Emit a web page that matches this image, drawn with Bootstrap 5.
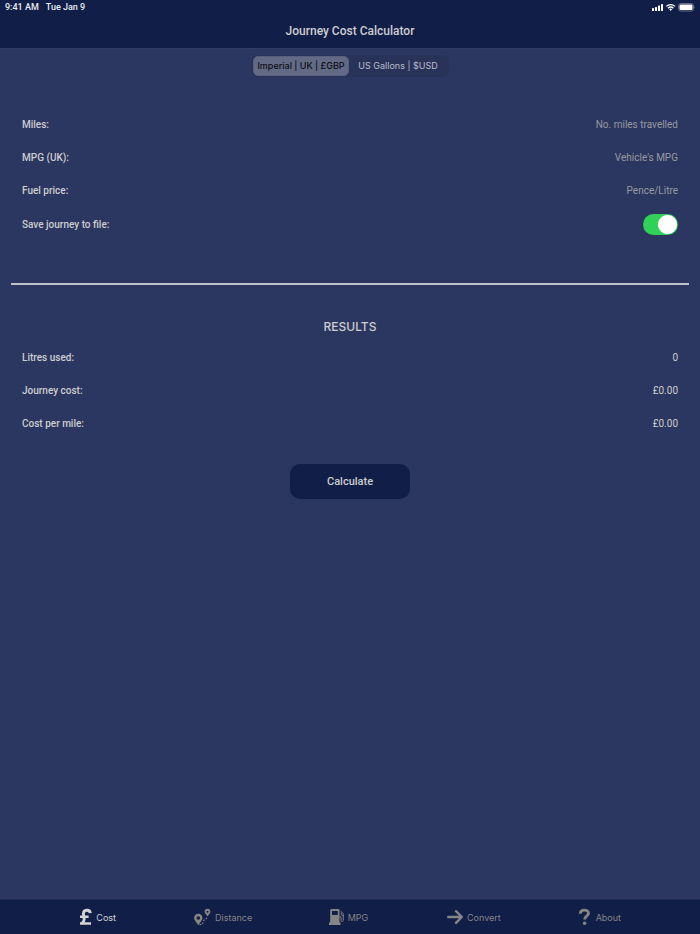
<!DOCTYPE html>
<html lang="en">
<head>
<meta charset="utf-8">
<meta name="viewport" content="width=device-width, initial-scale=1">
<title>Journey Cost Calculator</title>
<link href="https://cdn.jsdelivr.net/npm/bootstrap@5.3.0/dist/css/bootstrap.min.css" rel="stylesheet">
<style>
  body { font-family: Roboto, Inter, "Liberation Sans", sans-serif; font-size: 10px; line-height: 15px; background: #2b3760; color: #cdcdcf; }
  .top-area { background: #111e48; border-bottom: 1px solid #303c66; }
  .status-line { height: 14px; padding: 0 5px; font-size: 9px; color: #e8eaf0; }
  .status-text { gap: 7px; }
  .page-title { font-size: 12px; line-height: 34px; font-weight: 500; }
  .segments { background: #29335a; border-radius: 6px; padding: 1px 2px; margin-top: 6px; height: 22px; }
  .segments label { width: 96px; line-height: 18px; font-family: Inter, sans-serif; font-size: 9px; border-radius: 5px; padding: 0; border: 1px solid transparent; color: #b9bdc9; font-weight: 400; white-space: nowrap; }
  .segments .wide { width: 98px; }
  .segments .btn-check:checked + label { background: #636a86; border-color: #59617f; color: #0b0e18; font-weight: 500; }
  .entries { padding: 0 22px; }
  .entry { height: 33px; }
  .entry label, .entry dt { font-weight: 500; }
  .entry .form-control { width: 160px; font-size: 10px; line-height: 15px; color: #cdcdcf; }
  .entry .form-control::placeholder { color: #979a9f; opacity: 1; }
  .inputs { margin-top: 31px; }
  .switch-entry { height: 35px; }
  .form-switch .form-check-input { width: 35px; height: 21px; margin: 0; border: 0; background-color: #59617f; border-radius: 11px; background-size: 23px 23px; background-image: radial-gradient(circle, #fff 9px, transparent 10px); background-position: left -1px center; background-repeat: no-repeat; }
  .form-switch .form-check-input:checked { background-color: #30d158; background-position: right -1px center; background-image: radial-gradient(circle, #fff 9px, transparent 10px); }
  .divider { height: 2px; border: 0; background: #bfc1c9; opacity: 1; margin: 41px 11px 0; }
  .results-title { font-size: 12px; line-height: 16px; font-family: Inter, sans-serif; font-weight: 500; margin: 34px 0 6px; }
  .calc-btn { width: 120px; height: 35px; border: 0; border-radius: 10px; background: #111e48; color: #cdcdcf; font-size: 11px; line-height: 16px; font-weight: 500; margin-top: 24px; }
  .calc-btn:hover { background: #1b2a5a; color: #fff; }
  .tabs { background: #111e48; border-top: 1px solid #202c56; padding: 0 38px 0 35px; height: 35px; }
  .tabs .nav-link { color: #858585; padding: 0; font-family: Inter, sans-serif; font-size: 9px; gap: 4px; }
  .tabs .nav-link.active { color: #d4d4d4; }
</style>
</head>
<body class="d-flex flex-column min-vh-100">
<header class="top-area">
  <div class="status-line d-flex align-items-center justify-content-between">
    <div class="status-text d-flex fw-medium"><span>9:41 AM</span><span>Tue Jan 9</span></div>
    <svg width="44" height="10" viewBox="0 0 44 10" fill="#fff" aria-label="Signal, Wi-Fi and battery">
      <rect x="1" y="6" width="2" height="3" rx=".5"/><rect x="4" y="5" width="2" height="4" rx=".5"/><rect x="7" y="3.500" width="2" height="5.500" rx=".5"/><rect x="10" y="2" width="2" height="7" rx=".5"/>
      <path d="M15.300 4.400a6.400 6.400 0 0 1 8.800 0M17 6.200a4 4 0 0 1 5.400 0" fill="none" stroke="#fff" stroke-width="1.300"/>
      <path d="M18.300 7.300a2 2 0 0 1 2.800 0L19.700 9z"/>
      <rect x="27.500" y="1.500" width="15" height="7.500" rx="2.300" fill="none" stroke="#7c849f" stroke-width=".8"/><rect x="28.500" y="2.500" width="13" height="5.500" rx="1.300"/><path d="M43.300 4v2.500q1-1.200 0-2.500z" fill="#7c849f"/>
    </svg>
  </div>
  <h1 class="page-title text-center mb-0">Journey Cost Calculator</h1>
</header>

<main class="flex-grow-1">
  <div class="d-flex justify-content-center">
    <div class="segments d-flex align-items-center" role="group" aria-label="Units">
      <input class="btn-check" type="radio" name="units" id="uk" checked>
      <label class="btn" for="uk">Imperial | UK | £GBP</label>
      <input class="btn-check" type="radio" name="units" id="us">
      <label class="btn wide" for="us">US Gallons | $USD</label>
    </div>
  </div>

  <form class="entries inputs">
    <div class="entry d-flex align-items-center justify-content-between">
      <label for="miles">Miles:</label>
      <input class="form-control bg-transparent border-0 p-0 text-end" id="miles" type="text" placeholder="No. miles travelled">
    </div>
    <div class="entry d-flex align-items-center justify-content-between">
      <label for="mpg">MPG (UK):</label>
      <input class="form-control bg-transparent border-0 p-0 text-end" id="mpg" type="text" placeholder="Vehicle's MPG">
    </div>
    <div class="entry d-flex align-items-center justify-content-between">
      <label for="price">Fuel price:</label>
      <input class="form-control bg-transparent border-0 p-0 text-end" id="price" type="text" placeholder="Pence/Litre">
    </div>
    <div class="entry switch-entry form-switch p-0 d-flex align-items-center justify-content-between">
      <label for="save">Save journey to file:</label>
      <input class="form-check-input" id="save" type="checkbox" role="switch" checked>
    </div>
  </form>

  <hr class="divider">

  <h2 class="results-title text-center">RESULTS</h2>
  <dl class="entries mb-0">
    <div class="entry d-flex align-items-center justify-content-between"><dt>Litres used:</dt><dd class="mb-0">0</dd></div>
    <div class="entry d-flex align-items-center justify-content-between"><dt>Journey cost:</dt><dd class="mb-0">£0.00</dd></div>
    <div class="entry d-flex align-items-center justify-content-between"><dt>Cost per mile:</dt><dd class="mb-0">£0.00</dd></div>
  </dl>
  <div class="text-center">
    <button class="btn calc-btn p-0" type="button">Calculate</button>
  </div>
</main>

<nav class="tabs sticky-bottom d-flex" aria-label="Sections">
  <div class="nav nav-justified flex-nowrap w-100">
    <a class="nav-link active d-flex align-items-center justify-content-center" href="#cost" aria-current="page">
      <svg width="13" height="18" viewBox="0 0 13 18" fill="none" stroke="currentColor" stroke-width="2.900"><path d="M11.300 5.200C11 1.200 4.400 1.200 4.400 5.800c0 2.200 1 3.600.8 5.600-.2 1.700-.9 2.900-2.400 4"/><path d="M1 8.800h8.600M1 15.400h11" stroke-width="2.500"/></svg>
      <span>Cost</span>
    </a>
    <a class="nav-link d-flex align-items-center justify-content-center" href="#distance">
      <svg width="17" height="18" viewBox="0 0 17 18" fill="currentColor"><path fill-rule="evenodd" d="M4.300 5.800a4.200 4.200 0 0 1 4.200 4.200c0 2.500-2.700 4.700-4.200 7.200C2.800 14.700.1 12.500.1 10a4.200 4.200 0 0 1 4.200-4.200zm0 2.400a1.800 1.800 0 1 0 0 3.600 1.800 1.800 0 0 0 0-3.600zM13.500.8a2.900 2.900 0 0 1 2.900 2.900c0 1.700-1.900 3-2.900 4.800-1-1.800-2.900-3.100-2.900-4.800A2.900 2.900 0 0 1 13.500.8zm0 1.900a1 1 0 1 0 0 2 1 1 0 0 0 0-2z"/><path d="M5.500 16.500c4 0 3.200-1.500 3.900-3.300.5-1.700 2.900-2 4.100-4" fill="none" stroke="currentColor" stroke-width="1.200" stroke-dasharray="1.800 1.200"/></svg>
      <span>Distance</span>
    </a>
    <a class="nav-link d-flex align-items-center justify-content-center" href="#mpg-tab">
      <svg width="15" height="18" viewBox="0 0 15 18" fill="currentColor"><path fill-rule="evenodd" d="M2.500 1h6.800q1.200 0 1.200 1.200v12.300H11.500V17H0v-2.500h1.200V2.200Q1.200 1 2.500 1zM3 3v4h5.800V3z"/><path d="M10.500 8.200q1.600 0 1.600 1.800v2.600c0 1.500 2.200 1.300 2.200-.3V6.500q0-1-.8-1.700L11.800 3.200M12.300 4.500v2.200l1.900 1" fill="none" stroke="currentColor"/></svg>
      <span>MPG</span>
    </a>
    <a class="nav-link d-flex align-items-center justify-content-center" href="#convert">
      <svg width="16" height="16" viewBox="0 0 16 16" fill="none" stroke="currentColor" stroke-width="2.400" stroke-linecap="round" stroke-linejoin="round"><path d="M1.200 8h13.300M9 2.200L14.800 8 9 13.800"/></svg>
      <span>Convert</span>
    </a>
    <a class="nav-link d-flex align-items-center justify-content-center" href="#about">
      <svg width="14" height="18" viewBox="0 0 14 18" fill="none" stroke="currentColor" stroke-width="2.900"><path d="M2.200 5.800C2.400.9 10.500 1 10.500 5.300c0 3-3.900 2.900-3.900 6.300"/><circle cx="6.600" cy="15.300" r="1.800" fill="currentColor" stroke="none"/></svg>
      <span>About</span>
    </a>
  </div>
</nav>
<script src="https://cdn.jsdelivr.net/npm/bootstrap@5.3.0/dist/js/bootstrap.bundle.min.js"></script>
</body>
</html>
